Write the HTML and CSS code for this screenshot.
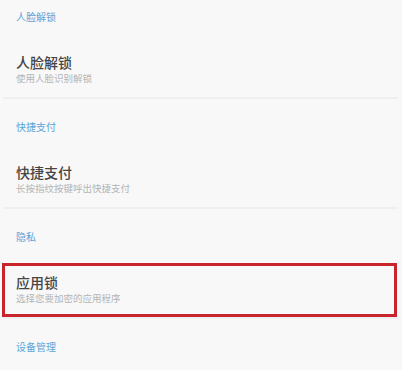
FILE: index.html
```html
<!DOCTYPE html>
<html lang="zh-CN">
<head>
<meta charset="UTF-8">
<title>安全和隐私</title>
<link rel="stylesheet" href="styles.css">
</head>
<body>

<!-- 人脸解锁 -->
<div class="group">
  <div class="group-title">人脸解锁</div>
  <div class="item">
    <div class="item-title">人脸解锁</div>
    <div class="item-desc">使用人脸识别解锁</div>
  </div>
  <div class="divider"></div>
</div>

<!-- 快捷支付 -->
<div class="group">
  <div class="group-title">快捷支付</div>
  <div class="item">
    <div class="item-title">快捷支付</div>
    <div class="item-desc">长按指纹按键呼出快捷支付</div>
  </div>
  <div class="divider"></div>
</div>

<!-- 隐私 -->
<div class="group">
  <div class="group-title">隐私</div>
  <div class="item item-marked">
    <div class="item-title">应用锁</div>
    <div class="item-desc">选择您要加密的应用程序</div>
  </div>
  <div class="divider"></div>
</div>

<!-- 设备管理 -->
<div class="group group-last">
  <div class="group-title">设备管理</div>
</div>

</body>
</html>
```

FILE: styles.css
```css
body {
  margin: 0;
  background-color: #f8f8f8;
  font-family: "Noto Sans CJK SC", "Noto Sans", sans-serif;
}

.group {
  height: 110px;
}

.group-last {
  height: 40px;
}

.group-title {
  height: 40px;
  box-sizing: border-box;
  padding: 11px 16px 0;
  font-size: 10px;
  line-height: 12px;
  color: #5aa4d8;
}

.item {
  height: 54px;
  box-sizing: border-box;
  margin-top: 3px;
  padding: 11px 16px 0;
}

.item-title {
  font-size: 14px;
  line-height: 16px;
  font-weight: 500;
  color: #454545;
}

.item-desc {
  margin-top: 3px;
  font-size: 9.5px;
  line-height: 11px;
  color: #b4b4b4;
}

/* 红框标注 */
.item-marked {
  margin: 3px 5px 0 2px;
  padding: 8px 11px 0;
  border: 3px solid #c8242c;
}

.divider {
  height: 2px;
  margin: 0 4px 0 3px;
  background-color: #efefef;
}
```
